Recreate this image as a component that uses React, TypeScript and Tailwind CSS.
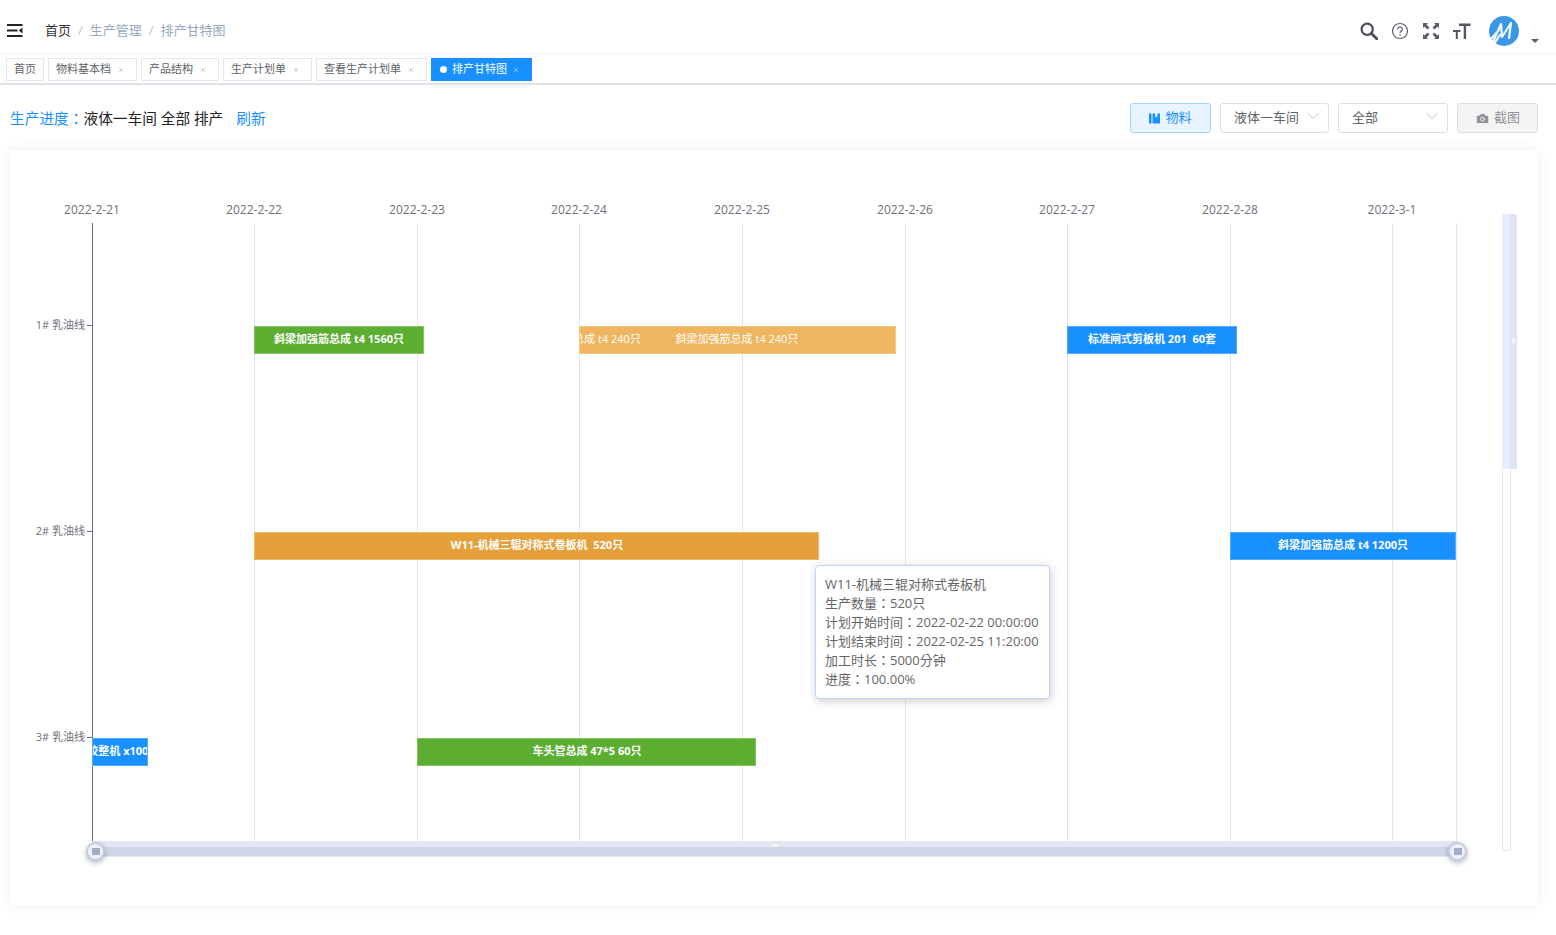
import { ChevronDown, Camera, X } from 'lucide-react';

const DAYS = [
  { label: '2022-2-21', x: 92 },
  { label: '2022-2-22', x: 254 },
  { label: '2022-2-23', x: 417 },
  { label: '2022-2-24', x: 579 },
  { label: '2022-2-25', x: 742 },
  { label: '2022-2-26', x: 905 },
  { label: '2022-2-27', x: 1067 },
  { label: '2022-2-28', x: 1230 },
  { label: '2022-3-1', x: 1392 },
];

const ROWS = [
  { label: '1# 乳油线', y: 325 },
  { label: '2# 乳油线', y: 531 },
  { label: '3# 乳油线', y: 737 },
];

// bars use page coordinates, textX is the text centre inside the bar
const BARS = [
  { left: 254, right: 424, y: 326, color: '#5BAE2F', text: '斜梁加强筋总成 t4 1560只', textX: 84, bold: true, edge: 'border' },
  { left: 579, right: 642, y: 326, color: '#EFB65F', text: '总成 t4 240只', textX: 27, bold: false, edge: 'border border-r-0' },
  { left: 641, right: 896, y: 326, color: '#EFB65F', text: '斜梁加强筋总成 t4 240只', textX: 96, bold: false, edge: 'border border-l-0' },
  { left: 1067, right: 1237, y: 326, color: '#1890FF', text: '标准闸式剪板机 201  60套', textX: 84, bold: true, edge: 'border' },
  { left: 254, right: 819, y: 532, color: '#E5A03A', text: 'W11-机械三辊对称式卷板机  520只', textX: 282, bold: true, edge: 'border' },
  { left: 1230, right: 1456, y: 532, color: '#1890FF', text: '斜梁加强筋总成 t4 1200只', textX: 112, bold: true, edge: 'border' },
  { left: 92, right: 148, y: 738, color: '#1890FF', text: '校整机 x1000', textX: 28, bold: true, edge: 'border' },
  { left: 417, right: 756, y: 738, color: '#5BAE2F', text: '车头管总成 47*5 60只', textX: 169, bold: true, edge: 'border' },
];

const TABS = ['物料基本档', '产品结构', '生产计划单', '查看生产计划单'];

const TOOLTIP = [
  'W11-机械三辊对称式卷板机',
  '生产数量：520只',
  '计划开始时间：2022-02-22 00:00:00',
  '计划结束时间：2022-02-25 11:20:00',
  '加工时长：5000分钟',
  '进度：100.00%',
];

function Handle({ x }: { x: number }) {
  return (
    <div
      className="absolute top-[842px] flex h-[19px] w-[19px] items-center justify-center rounded-full border-2 border-[#c5cde0] bg-[#eef1f7] shadow-[0_2px_5px_rgba(60,70,110,0.4)]"
      style={{ left: x - 9 }}
    >
      <div className="h-[7px] w-[8px] bg-[#a4aec8]" />
    </div>
  );
}

function Avatar() {
  return (
    <svg width="32" height="32" viewBox="0 0 32 32">
      <circle cx="16" cy="16" r="15" fill="#3b97e6" />
      <path d="M5 27 L13 9 L14 22 L23 8 L21 23 M3 24 L11 15 M6 29 L12 20" fill="none" stroke="#fff" strokeWidth="2.2" strokeLinecap="round" strokeLinejoin="round" opacity="0.92" />
    </svg>
  );
}

function Select({ label, width }: { label: string; width: string }) {
  return (
    <div className={`flex h-[30px] items-center justify-between rounded-[3px] border border-[#dcdfe6] bg-white pl-[13px] pr-[5px] text-[13px] text-[#606266] ${width}`}>
      <span>{label}</span>
      <ChevronDown size={20} strokeWidth={0.9} className="mb-[5px] text-[#a8acb4]" />
    </div>
  );
}

export default function App() {
  return (
    <div className="relative h-[935px] w-[1556px] overflow-hidden bg-white font-['Open_Sans','Noto_Sans_CJK_SC',sans-serif] text-[#606266]">
      {/* Header */}
      <div className="flex h-[54px] items-center border-b border-[#f2f2f2] pl-[7px] pr-[17px] pt-[8px]">
        <svg width="16" height="13" viewBox="0 0 16 13" className="mr-[22px]">
          <path d="M0 1h15.500M0 6.500h10.500M0 12h15.500" stroke="#222" strokeWidth="1.800" />
          <path d="M15.500 3.500v6l-3.800-3z" fill="#222" />
        </svg>
        <nav className="flex items-center text-[13px]">
          <span className="text-[#303133]">首页</span>
          <span className="mx-[7px] text-[#c0c4cc]">/</span>
          <span className="text-[#97a8be]">生产管理</span>
          <span className="mx-[7px] text-[#c0c4cc]">/</span>
          <span className="text-[#97a8be]">排产甘特图</span>
        </nav>
        <div className="ml-auto flex items-center">
          <svg width="18" height="18" viewBox="0 0 18 18">
            <circle cx="7.200" cy="7.200" r="5.600" fill="none" stroke="#4a4f57" strokeWidth="2.200" />
            <path d="M11.500 11.500L17 17" stroke="#4a4f57" strokeWidth="2.800" strokeLinecap="round" />
          </svg>
          <svg width="18" height="18" viewBox="0 0 18 18" className="ml-[13px]">
            <circle cx="9" cy="9" r="7.500" fill="none" stroke="#5a5e66" strokeWidth="1.200" />
            <path d="M6.700 7.200a2.300 2.300 0 1 1 3.600 1.900c-.9.600-1.300 1-1.300 2" fill="none" stroke="#5a5e66" strokeWidth="1.200" />
            <circle cx="9" cy="13" r=".8" fill="#5a5e66" />
          </svg>
          <svg width="18" height="18" viewBox="0 0 18 18" className="ml-[13px]">
            <path d="M1 1h5L4.500 2.500 7.500 5.500 5.500 7.500 2.500 4.500 1 6zM17 1v5l-1.500-1.500-3 3-2-2 3-3L12 1zM1 17v-5l1.500 1.500 3-3 2 2-3 3L6 17zM17 17h-5l1.500-1.500-3-3 2-2 3 3L17 12z" fill="#5a5e66" />
          </svg>
          <svg width="18" height="18" viewBox="0 0 18 18" className="ml-[13px]">
            <path d="M6 1.500h11.500v2.400h-4.400V17h-2.400V3.900H6zM0 8h7.500v2H4.800v7H2.800v-7H0z" fill="#53575e" />
          </svg>
          <div className="ml-[17px]">
            <Avatar />
          </div>
          <div className="ml-[11px] mt-[20px] h-0 w-0 border-x-[4px] border-t-[4px] border-x-transparent border-t-[#5a5e66]" />
        </div>
      </div>

      {/* Tabs */}
      <div className="flex h-[31px] items-start gap-[4px] border-b-2 border-[#e2e3e8] pl-[6px] pt-[4px] text-[11px]">
        <div className="flex h-[23px] w-[38px] items-center justify-center border border-[#e4e7ed] text-[#606266]">首页</div>
        {TABS.map((tab) => (
          <div key={tab} className="flex h-[23px] items-center border border-[#e4e7ed] pl-[7px] pr-[12px] text-[#606266]">
            <span>{tab}</span>
            <X size={6} strokeWidth={2} className="ml-[7px] text-[#909399]" />
          </div>
        ))}
        <div className="flex h-[23px] items-center bg-[#1890ff] pl-[9px] pr-[13px] text-white">
          <span className="mr-[5px] h-[7px] w-[7px] rounded-full bg-white" />
          <span>排产甘特图</span>
          <X size={6} strokeWidth={2} className="ml-[6px]" />
        </div>
      </div>

      {/* Toolbar */}
      <div className="flex h-[65px] items-start pl-[10px] pr-[18px] pt-[18px]">
        <div className="flex h-[30px] items-center text-[14.7px]">
          <span className="font-['Open_Sans','Noto_Sans_CJK_TC',sans-serif] text-[#1890ff]">生产进度：</span>
          <span className="text-[#222]">液体一车间 全部 排产</span>
          <span className="ml-[13px] text-[#1890ff]">刷新</span>
        </div>
        <div className="ml-auto flex items-center gap-[9px]">
          <div className="flex h-[30px] w-[81px] items-center justify-center gap-[5px] rounded-[3px] border border-[#a3d3ff] bg-[#e8f4ff] text-[13px] text-[#1890ff]">
            <svg width="11" height="11" viewBox="0 0 11 11">
              <path d="M0 .5h2.500v10H0zM3.500.5H6v4l1.200-1 1.200 1V.5H11v10H3.500z" fill="#1890ff" />
            </svg>
            物料
          </div>
          <Select label="液体一车间" width="w-[109px]" />
          <Select label="全部" width="w-[110px]" />
          <div className="flex h-[30px] w-[81px] items-center justify-center gap-[4px] rounded-[3px] border border-[#dcdfe6] bg-[#f4f4f5] text-[13px] text-[#909399]">
            <Camera size={15} fill="#909399" stroke="#f4f4f5" strokeWidth={1.5} />
            截图
          </div>
        </div>
      </div>

      {/* Card */}
      <div className="absolute left-[10px] top-[150px] h-[755px] w-[1528px] bg-white shadow-[0_0_12px_rgba(0,0,0,0.08)]" />

      {/* Gantt chart */}
      <div className="absolute inset-0 text-[11px] text-[#6e7079]">
        {DAYS.map((day, i) => (
          <div key={day.label}>
            <div className="absolute top-[203px] w-[80px] -translate-x-1/2 text-center text-[12px] leading-[14px]" style={{ left: day.x }}>
              {day.label}
            </div>
            <div
              className={`absolute top-[223px] w-px ${i === 0 ? 'bg-[#6e7079]' : 'bg-[#e0e6f1]'}`}
              style={{ left: day.x, height: 618 }}
            />
          </div>
        ))}
        <div className="absolute left-[1456px] top-[223px] h-[618px] w-px bg-[#e0e6f1]" />

        {ROWS.map((row) => (
          <div key={row.label} className="absolute flex items-center" style={{ left: 0, top: row.y - 7, height: 14, width: 92 }}>
            <span className="ml-auto mr-[2px] leading-[14px]">{row.label}</span>
            <span className="h-px w-[5px] bg-[#6e7079]" />
          </div>
        ))}

        {BARS.map((bar) => (
          <div
            key={bar.left + bar.text}
            className={`absolute h-[28px] overflow-hidden border-white/25 ${bar.edge}`}
            style={{ left: bar.left, top: bar.y, width: bar.right - bar.left, backgroundColor: bar.color }}
          >
            <span
              className={`absolute top-[3px] -translate-x-1/2 whitespace-pre text-[11px] leading-[17px] text-white ${bar.bold ? 'font-bold' : ''}`}
              style={{ left: bar.textX }}
            >
              {bar.text}
            </span>
          </div>
        ))}

        {/* Horizontal data zoom */}
        <div className="absolute left-[92px] top-[841px] h-[16px] w-[1366px] bg-[#e2e7f3]">
          <div className="mt-[6px] h-[9px] bg-[#d0d6e5]" />
          <div className="absolute left-[680px] top-[3px] h-[3px] w-[6px] bg-[#f3f5fa]" />
        </div>
        <Handle x={95} />
        <Handle x={1457} />

        {/* Vertical data zoom */}
        <div className="absolute left-[1502px] top-[214px] h-[637px] w-[9px] rounded-[3px] border border-[#e0e6f6]" />
        <div className="absolute left-[1502px] top-[214px] h-[255px] w-[15px] rounded-t-[3px] bg-[#dfe5f3]">
          <div className="h-full w-[8px] rounded-t-[3px] bg-[#e6edfc]" />
          <div className="absolute left-[10px] top-[124px] h-[6px] w-[3px] bg-[#eff2f9]" />
        </div>

        {/* Tooltip */}
        <div className="absolute left-[815px] top-[565px] flex h-[134px] w-[235px] flex-col rounded-[4px] border border-[#bcd6f7] bg-white pl-[9px] pt-[9px] font-['Open_Sans','Noto_Sans_CJK_TC',sans-serif] text-[13px] leading-[19px] text-[#666] shadow-[1px_2px_10px_rgba(0,0,0,0.2)]">
          {TOOLTIP.map((line) => (
            <div key={line} className="whitespace-nowrap">{line}</div>
          ))}
        </div>
      </div>
    </div>
  );
}
